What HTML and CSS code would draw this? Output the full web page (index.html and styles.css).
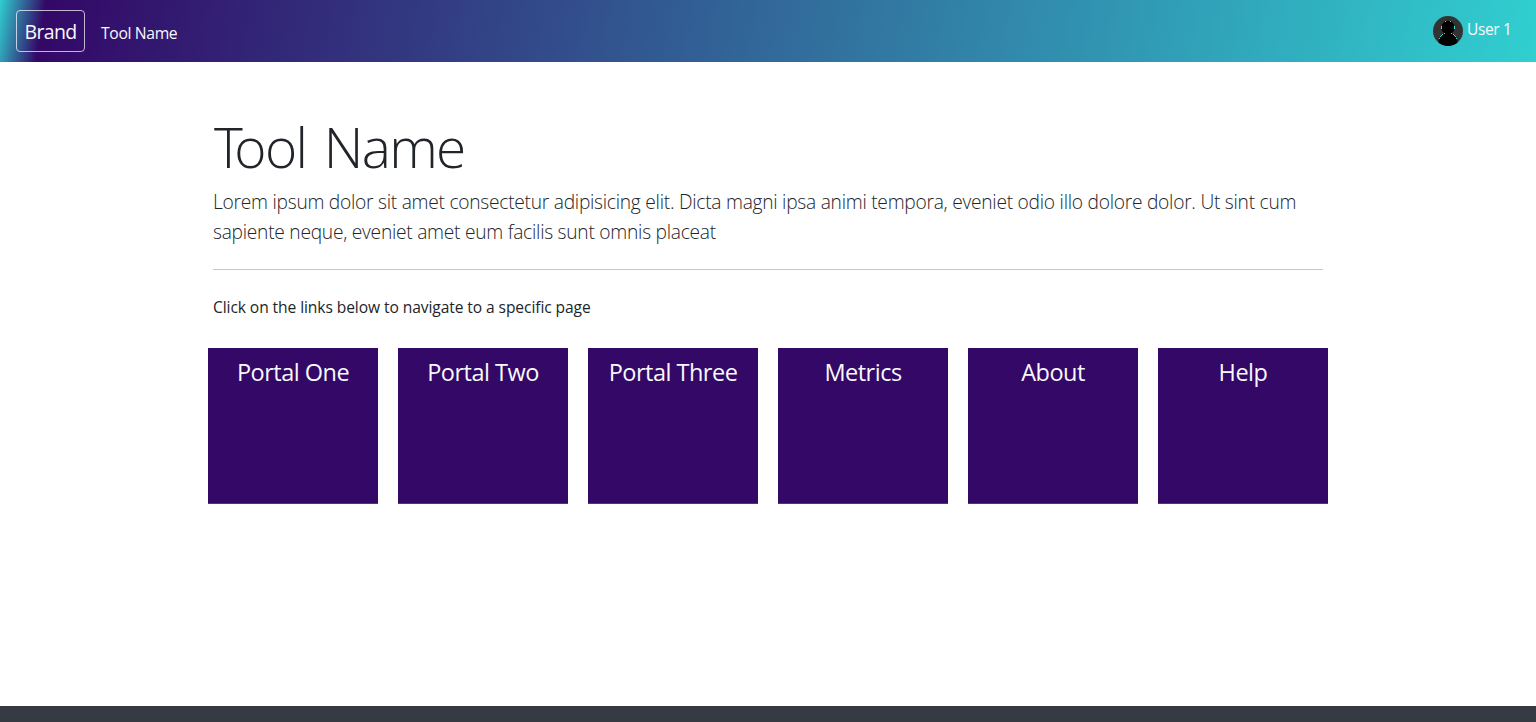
FILE: index.html
```html
<!DOCTYPE html>
<html lang="en">
<head>
<meta charset="utf-8">
<title>Tool Name</title>
<link rel="stylesheet" href="styles.css">
</head>
<body>
<header class="navbar">
  <a class="brand">Brand</a>
  <a class="tool-link">Tool Name</a>
  <div class="user">
    <svg class="avatar" viewBox="0 0 30 30" width="30" height="30">
      <circle cx="15" cy="15" r="15" fill="#333"/>
      <path d="M15 5C11 5 8.500 7.500 8.500 11.500c0 2.500 1 4.500 2.800 6C8.500 18.500 6 21.500 5.500 26.500A15 15 0 0 0 24.500 26.500C24 21.500 21.500 18.500 18.700 17.500c1.800-1.500 2.800-3.500 2.800-6C21.500 7.500 19 5 15 5z" fill="#000"/>
      <path d="M12 5.500h1M17 5.500h1M8.500 10v3M21.500 10v3M11 17.500h1M18 17.500h1M9 18.500h1M20 18.500h1M8 19.500h1M21 19.500h1M7 20.500h1M22 20.500h1M6 22.500h1M23 22.500h1" stroke="#40e0d0" fill="none"/>
    </svg>
    <span class="user-name">User 1</span>
  </div>
</header>
<main class="content">
  <h1 class="title"><span class="title-cap">T</span>ool Name</h1>
  <p class="lead">Lorem ipsum dolor sit amet consectetur adipisicing elit. Dicta magni ipsa animi tempora, eveniet odio illo dolore dolor. Ut sint cum<br>sapiente neque, eveniet amet eum facilis sunt omnis placeat</p>
  <hr class="rule">
  <p class="hint">Click on the links below to navigate to a specific page</p>
  <nav class="tiles">
    <a class="tile">Portal One</a>
    <a class="tile">Portal Two</a>
    <a class="tile">Portal Three</a>
    <a class="tile">Metrics</a>
    <a class="tile">About</a>
    <a class="tile">Help</a>
  </nav>
</main>
<footer class="footer"></footer>
</body>
</html>
```
FILE: styles.css
```css
* { box-sizing: border-box; }
body {
  margin: 0;
  height: 722px;
  overflow: hidden;
  display: flex;
  flex-direction: column;
  background: #fff;
  color: #212529;
  font-family: "Segoe UI", "Open Sans", sans-serif;
}
.navbar {
  height: 62px;
  flex: none;
  display: flex;
  align-items: flex-start;
  padding: 10px 24px 0 16px;
  color: #f8f9fa;
  background: linear-gradient(100deg, #30cfd0 0%, #330867 3%, #30cfd0 100%);
}
.brand {
  width: 69px;
  height: 42px;
  border: 1px solid rgba(255, 255, 255, .7);
  border-radius: 4px;
  text-align: center;
  font-size: 19.500px;
  letter-spacing: -.65px;
  line-height: 42px;
}
.tool-link {
  margin-left: 16px;
  font-size: 15.700px;
  letter-spacing: -.35px;
  line-height: 24px;
  padding-top: 11px;
}
.user {
  margin-left: auto;
  display: flex;
  padding-top: 6px;
}
.avatar { display: block; }
.user-name {
  width: 45px;
  margin-left: 4px;
  font-size: 15.500px;
  letter-spacing: -.35px;
  line-height: 26px;
  white-space: nowrap;
}
.content {
  flex: 1;
  width: 1110px;
  margin: 0 auto;
  padding-top: 52px;
}
.title {
  margin: -1px 0 0 1px;
  font-size: 55px;
  font-weight: 300;
  letter-spacing: -1.700px;
  word-spacing: 5px;
  line-height: 67px;
}
.title-cap { letter-spacing: -8.500px; }
.lead {
  margin: 7px 0 0;
  font-size: 19.200px;
  font-weight: 300;
  letter-spacing: -.26px;
  line-height: 30px;
  white-space: nowrap;
}
.rule {
  height: 1px;
  margin: 22px 0 25px;
  border: 0;
  background: #c8c8c8;
}
.hint {
  margin: 0;
  font-size: 15.600px;
  letter-spacing: -.09px;
  line-height: 24px;
}
.tiles {
  display: grid;
  grid-template-columns: repeat(6, 170px);
  gap: 20px;
  margin: 29px -5px 0;
}
.tile {
  height: 156px;
  border-bottom: 1px solid #552f80;
  padding-top: 6px;
  background: #330867;
  color: #f8f9fa;
  text-align: center;
  font-size: 23.500px;
  letter-spacing: -.5px;
  line-height: 36px;
}
.footer {
  flex: none;
  height: 16px;
  background: #363a43;
}
```
